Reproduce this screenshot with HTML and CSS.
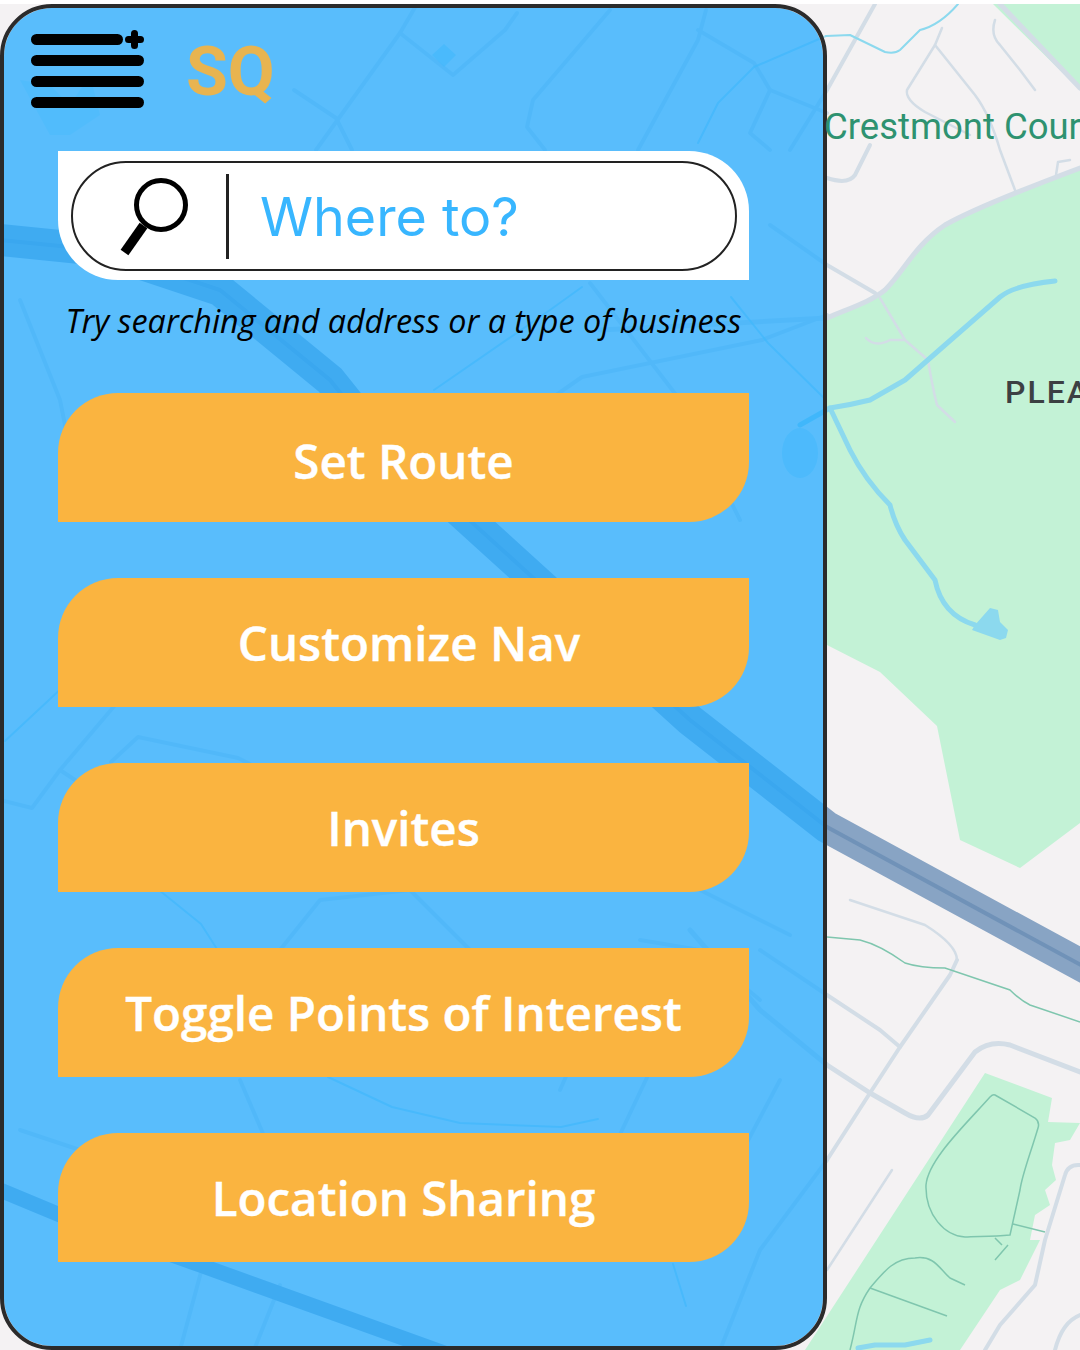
FILE: index.html
```html
<!DOCTYPE html>
<html lang="en">
<head>
  <meta charset="UTF-8">
  <title>SQ Menu</title>
  <link rel="stylesheet" href="styles.css">
</head>
<body>
  <div class="page">
    <!-- Map behind the menu, the panel is see-through so it shows under it too -->
    <svg class="map" width="1080" height="1350" viewBox="0 0 1080 1350" xmlns="http://www.w3.org/2000/svg">
      <g transform="translate(0 -4)">
      <g fill="#c3f2d6">
        <path d="M993 4L1080 90V4Z"/>
        <path d="M827 318C850 308 870 302 885 290C905 270 915 245 945 225C975 208 1040 183 1080 168V823L1020 868L960 840L937 726L880 672L827 645Z"/>
        <path d="M985 1073L1052 1098L1048 1122L1080 1123L1070 1140L1055 1143L1052 1165L1056 1180L1045 1190L1050 1205L1035 1215L1030 1240L1040 1240L1020 1280L1000 1290L960 1350H805Z"/>
      </g>

      <g fill="none" stroke="#d3dde6" stroke-linecap="round" stroke-linejoin="round">
        <g stroke-width="5">
          <path d="M1000 4L1080 88"/>
          <path d="M600 330L700 325L827 318C850 308 870 302 885 290C905 270 915 245 945 225C975 208 1040 183 1080 168"/>
          <path d="M690 930L760 1010L827 1065L870 1093L905 1113Q920 1122 928 1115L975 1052Q990 1040 1010 1045L1080 1072"/>
        </g>
        <g stroke-width="4">
          <path d="M875 4L827 90L790 150"/>
          <path d="M870 145L855 175Q848 185 827 178"/>
          <path d="M770 225L827 265L875 293"/>
          <path d="M760 950L827 995L880 1030L900 1047"/>
          <path d="M957 960L950 975L900 1047L870 1093L827 1160L760 1250L720 1350"/>
          <path d="M1080 1165Q1068 1164 1065 1175L1045 1240L1035 1285L1000 1325L985 1350"/>
          <path d="M1080 1315Q1062 1322 1055 1350"/>
          <path d="M417 4L400 33L316 150"/>
          <path d="M400 33L453 75L505 30L517 13"/>
          <path d="M610 10L533 100L527 127L545 150"/>
          <path d="M706 10L698 40L638 150"/>
          <path d="M698 30L754 63L770 90L750 133L770 150"/>
          <path d="M770 90L827 113"/>
          <path d="M294 90L336 118L352 150"/>
          <path d="M762 340L582 377L434 480"/>
          <path d="M827 315L762 340"/>
          <path d="M590 283L680 400L740 520"/>
          <path d="M320 600L420 640L520 700"/>
          <path d="M111 762L138 737L238 758L320 800"/>
          <path d="M0 800L32 808L60 770L116 704"/>
          <path d="M60 770L90 790L200 830"/>
          <path d="M280 950L320 900L410 890L470 950L520 960"/>
          <path d="M700 890L790 935"/>
          <path d="M640 940L700 950L760 1000"/>
          <path d="M560 1090L600 1000L680 980"/>
          <path d="M660 1050L570 1240"/>
          <path d="M780 1080L690 1250"/>
          <path d="M240 1080L270 1150"/>
          <path d="M20 1130L110 1160L240 1190"/>
          <path d="M201 1272L180 1350"/>
          <path d="M280 1285L254 1350"/>
          <path d="M20 300L60 400L80 500"/>
        </g>
        <g stroke-width="2.5">
          <path d="M850 900L925 925Q957 945 957 960"/>
          <path d="M942 28L935 45L907 90Q905 100 925 112L970 135"/>
          <path d="M935 45L975 95Q990 115 1000 150L1015 190"/>
          <path d="M995 20Q990 35 1000 45L1020 70L1035 90"/>
          <path d="M892 1170L827 1270"/>
          <path d="M1056 175L1058 162L1070 160"/>
          <path d="M880 298L905 340L928 360Q932 385 937 405L955 422"/>
          <path d="M866 338Q875 348 890 340L905 340"/>
        </g>
      </g>

      <!-- Highways -->
      <g fill="none">
        <path d="M0 240L100 250L220 290L330 380L370 430L530 575L690 720L827 827L1090 970" stroke="#88a4c4" stroke-width="32"/>
        <path d="M0 240L100 250L220 290L330 380L370 430L530 575L690 720L827 827L1090 970" stroke="#7092b8" stroke-width="4"/>
        <path d="M0 1190L60 1215L200 1265L450 1355" stroke="#88a4c4" stroke-width="15"/>
      </g>

      <!-- Water -->
      <g fill="none" stroke="#8cd9ee" stroke-linecap="round" stroke-linejoin="round">
        <path d="M800 425L830 408Q850 405 870 400L905 380L945 345L1000 297Q1015 285 1055 281" stroke-width="5"/>
        <path d="M830 408L850 450Q865 480 890 505Q895 525 905 540L935 580Q942 615 975 625" stroke-width="5"/>
        <path d="M858 1348L875 1345L905 1345L930 1340" stroke-width="5"/>
        <path d="M826 36L850 35L885 52Q895 54 900 50L920 30Q940 25 958 4" stroke-width="2"/>
        <g stroke-width="2" opacity="0.7">
          <path d="M826 36L754 67L718 103L698 143"/>
          <path d="M731 297L768 343L826 400"/>
          <path d="M434 390L550 310L582 287"/>
          <path d="M5 741L65 685L116 640"/>
          <path d="M159 890L201 924L217 949"/>
          <path d="M328 1077L392 1107L460 1123L561 1127L598 1119"/>
          <path d="M673 1264L686 1306"/>
        </g>
      </g>
      <g fill="#8cd9ee">
        <path d="M975 625L990 608L998 610L1000 622L1008 630L1006 638L1000 640L972 630Z"/>
        <ellipse cx="800" cy="453" rx="18" ry="25" opacity="0.5"/>
        <path d="M444 44L456 55L444 67L432 55Z" opacity="0.6"/>
        <path d="M20 80L50 85L70 105L90 75L100 115L70 135H50Z" opacity="0.3"/>
      </g>

      <!-- Trails -->
      <g fill="none" stroke="#7fc6ae" stroke-width="1.5">
        <path d="M827 937L860 940Q880 945 905 963Q920 968 945 968L1010 990Q1020 1000 1030 1005L1080 1022"/>
        <path d="M995 1095L1035 1118Q1040 1122 1038 1128C1030 1155 1022 1175 1020 1190L1010 1235C990 1237 975 1236 965 1237C945 1236 925 1215 926 1185C928 1160 965 1125 990 1097Q993 1094 995 1095Z"/>
        <path d="M1013 1224L1045 1232M995 1238L1002 1245M1008 1245L995 1260"/>
        <path d="M850 1350C858 1320 855 1310 870 1288C885 1270 895 1258 915 1258C935 1255 940 1270 950 1278L965 1285"/>
        <path d="M870 1288L947 1316"/>
      </g>
      </g>
    </svg>

    <div class="panel">
      <div class="header">
        <svg class="menu-icon" width="113" height="78" viewBox="0 0 113 78" xmlns="http://www.w3.org/2000/svg">
          <rect x="0" y="4" width="92" height="11" rx="5.5"/>
          <rect x="0" y="25" width="113" height="11" rx="5.5"/>
          <rect x="0" y="46" width="113" height="11" rx="5.5"/>
          <rect x="0" y="67" width="113" height="11" rx="5.5"/>
          <path d="M103.5 3.500V15.500M97.500 9.500H109.500" stroke="#000" stroke-width="7" stroke-linecap="round"/>
        </svg>
        <span class="logo">SQ</span>
      </div>

      <div class="search-card">
        <div class="search-pill">
          <svg class="search-icon" width="70" height="84" viewBox="0 0 70 84" xmlns="http://www.w3.org/2000/svg">
            <circle cx="42" cy="29" r="24.500" fill="none" stroke="#000" stroke-width="5"/>
            <path d="M24.500 49.500L5.500 76.500" fill="none" stroke="#000" stroke-width="9.500"/>
          </svg>
          <div class="search-divider"></div>
          <span class="search-text">Where to?</span>
        </div>
      </div>

      <p class="hint">Try searching and address or a type of business</p>

      <div class="actions">
        <div class="action action-first">Set Route</div>
        <div class="action action-nudge">Customize Nav</div>
        <div class="action">Invites</div>
        <div class="action">Toggle Points of Interest</div>
        <div class="action">Location Sharing</div>
      </div>
    </div>

    <span class="map-label map-label-green">Crestmont Cour</span>
    <span class="map-label map-label-dark">PLEA</span>
  </div>
</body>
</html>
```

FILE: styles.css
```css
body {
  margin: 0;
  background: #fff;
  font-family: "Open Sans", "Noto Sans", sans-serif;
}
.page {
  position: relative;
  width: 1080px;
  height: 1350px;
  overflow: hidden;
  padding-top: 4px;
  box-sizing: border-box;
}
.map {
  position: absolute;
  top: 4px;
  left: 0;
  background: #f4f2f3;
}
.panel {
  position: relative;
  width: 827px;
  height: 1346px;
  box-sizing: border-box;
  padding: 0 74px 0 54px;
  border: 4px solid #2b2b2b;
  border-radius: 52px;
  background: rgba(42, 173, 255, 0.77);
  background-clip: padding-box;
}

/* Header */
.header {
  display: flex;
  align-items: flex-start;
  height: 143px;
  margin-left: -27px;
}
.menu-icon {
  margin-top: 22px;
}
.logo {
  margin: 24px 0 0 42px;
  font-family: Roboto, sans-serif;
  font-size: 68px;
  font-weight: 700;
  line-height: 80px;
  color: #e8b450;
}

/* Search */
.search-card {
  height: 129px;
  box-sizing: border-box;
  padding: 10px 12px 9px 13px;
  background: #fff;
  border-radius: 0 60px 0 60px;
}
.search-pill {
  display: flex;
  align-items: center;
  height: 110px;
  box-sizing: border-box;
  border: 2.5px solid #222;
  border-radius: 55px;
}
.search-icon {
  margin-left: 46px;
  margin-top: 3px;
}
.search-divider {
  width: 3px;
  height: 85px;
  margin-left: 37px;
  background: #222;
}
.search-text {
  margin-left: 31px;
  font-family: Inter, sans-serif;
  font-size: 53.8px;
  color: #38b6ff;
}
.hint {
  margin: 20px -20px 53px;
  font-size: 32.3px;
  line-height: 40px;
  font-style: italic;
  text-align: center;
  white-space: nowrap;
  color: #000;
}

/* Buttons */
.actions {
  display: flex;
  flex-direction: column;
  gap: 56px;
}
.action {
  display: flex;
  align-items: center;
  justify-content: center;
  height: 129px;
  box-sizing: border-box;
  padding-bottom: 1px;
  border-radius: 60px 0 60px 0;
  background: #fab440;
  font-size: 47.5px;
  font-weight: 600;
  -webkit-text-stroke: 0.4px #fff;
  color: #fff;
  white-space: nowrap;
}
.action-first {
  padding: 6px 0 0;
}
.action-nudge {
  padding-left: 11px;
}

/* Place names on the map */
.map-label {
  position: absolute;
  font-family: Roboto, sans-serif;
  white-space: nowrap;
}
.map-label-green {
  top: 105px;
  left: 824px;
  font-size: 36.5px;
  color: #2e9270;
}
.map-label-dark {
  top: 373px;
  left: 1005px;
  font-size: 32px;
  font-weight: 500;
  letter-spacing: 2px;
  color: #3c4043;
}
```
